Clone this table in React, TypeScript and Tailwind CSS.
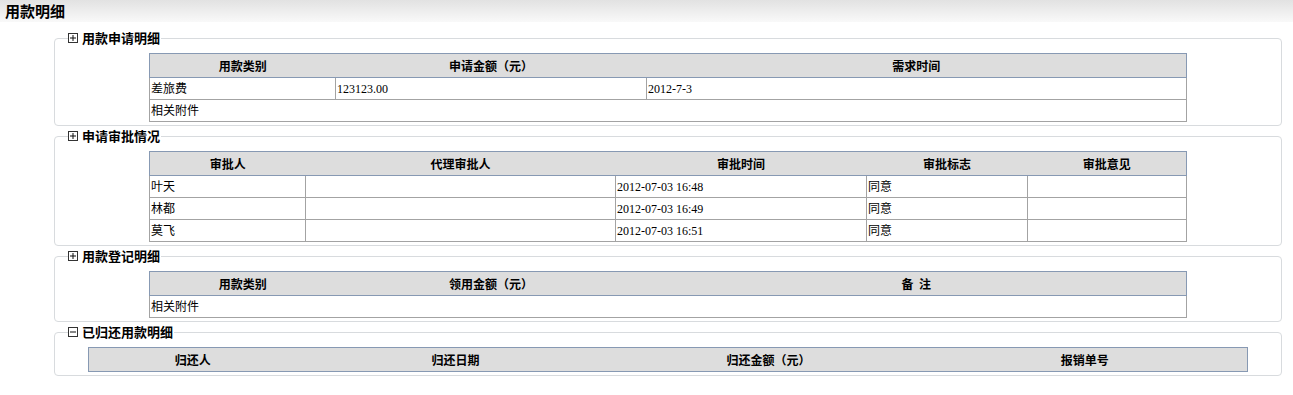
const font = "font-['Liberation_Serif','Noto_Sans_CJK_SC',serif]";

type Col = { label: string; width: number };

function BoxIcon({ open }: { open: boolean }) {
  return (
    <span className="inline-flex h-[10px] w-[10px] items-center justify-center border border-[#333] bg-white">
      <svg width="8" height="8" viewBox="0 0 8 8">
        <rect x="1" y="3.5" width="6" height="1" fill="#111" />
        {open ? null : <rect x="3.5" y="1" width="1" height="6" fill="#111" />}
      </svg>
    </span>
  );
}

function Section({ title, expanded, children }: { title: string; expanded?: boolean; children: React.ReactNode }) {
  return (
    <fieldset className="ml-[54px] mr-[11px] rounded-[4px] border border-[#d8dbde] pb-[3px]">
      <legend className="ml-[13px] h-[14px] pr-[1px]">
        <span className="flex items-center gap-[4px] leading-[14px]">
          <BoxIcon open={!!expanded} />
          <span className="font-['Noto_Sans_CJK_SC',sans-serif] text-[13px] font-bold text-black">{title}</span>
        </span>
      </legend>
      <div className="mt-[8px] flex justify-center">{children}</div>
    </fieldset>
  );
}

function DataTable({ cols, rows, width }: { cols: Col[]; rows: React.ReactNode[][]; width: number }) {
  return (
    <table
      className={`table-fixed border-collapse border border-[#8799b3] text-[12px] text-black ${font}`}
      style={{ width }}
    >
      <colgroup>
        {cols.map((c) => (
          <col key={c.label} style={{ width: c.width }} />
        ))}
      </colgroup>
      <thead>
        <tr className="h-[24px] bg-[#dddddd]">
          {cols.map((c) => (
            <th key={c.label} className="border-b border-[#8799b3] p-0 text-center font-['Noto_Sans_CJK_SC',sans-serif] font-bold whitespace-pre">
              {c.label}
            </th>
          ))}
        </tr>
      </thead>
      <tbody>
        {rows.map((r, i) => (
          <tr key={i} className="h-[22px]">
            {r.map((cell, j) => (
              <td
                key={j}
                colSpan={r.length === 1 ? cols.length : 1}
                className="border border-[#a3a3a3] px-[1px] py-0 text-left align-middle"
              >
                {cell}
              </td>
            ))}
          </tr>
        ))}
      </tbody>
    </table>
  );
}

export default function App() {
  return (
    <div className="min-h-[395px] w-[1293px] bg-white">
      <div className="flex h-[22px] items-center bg-gradient-to-b from-[#e2e2e2] to-[#f9f9f9] pl-[5px]">
        <span className="font-['Noto_Sans_CJK_SC',sans-serif] text-[15px] font-bold text-black">用款明细</span>
      </div>
      <div className="flex flex-col gap-[3px] pt-[9px]">
        <Section title="用款申请明细">
          <DataTable
            width={1037}
            cols={[
              { label: "用款类别", width: 186 },
              { label: "申请金额（元）", width: 311 },
              { label: "需求时间", width: 540 },
            ]}
            rows={[["差旅费", "123123.00", "2012-7-3"], ["相关附件"]]}
          />
        </Section>
        <Section title="申请审批情况">
          <DataTable
            width={1037}
            cols={[
              { label: "审批人", width: 156 },
              { label: "代理审批人", width: 310 },
              { label: "审批时间", width: 251 },
              { label: "审批标志", width: 161 },
              { label: "审批意见", width: 159 },
            ]}
            rows={[
              ["叶天", "", "2012-07-03 16:48", "同意", ""],
              ["林都", "", "2012-07-03 16:49", "同意", ""],
              ["莫飞", "", "2012-07-03 16:51", "同意", ""],
            ]}
          />
        </Section>
        <Section title="用款登记明细">
          <DataTable
            width={1037}
            cols={[
              { label: "用款类别", width: 186 },
              { label: "领用金额（元）", width: 311 },
              { label: "备  注", width: 540 },
            ]}
            rows={[["相关附件"]]}
          />
        </Section>
        <Section title="已归还用款明细" expanded>
          <DataTable
            width={1159}
            cols={[
              { label: "归还人", width: 208 },
              { label: "归还日期", width: 318 },
              { label: "归还金额（元）", width: 308 },
              { label: "报销单号", width: 325 },
            ]}
            rows={[]}
          />
        </Section>
      </div>
    </div>
  );
}
